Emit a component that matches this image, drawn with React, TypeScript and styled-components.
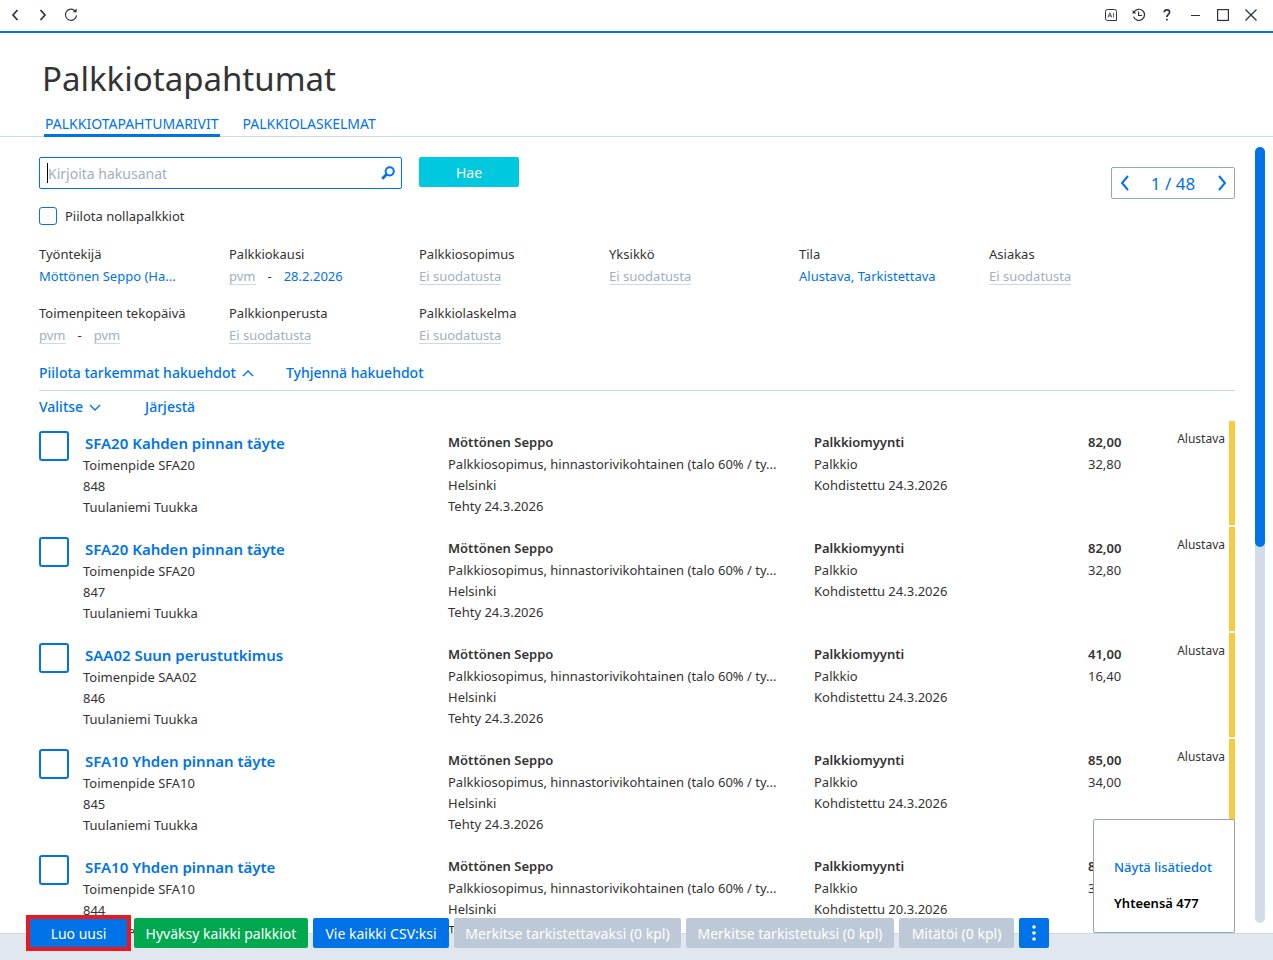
import React from "react";
import styled, { createGlobalStyle, css } from "styled-components";

const blue = "#0073e8";
const ink = "#333333";
const line = "#ccd8e4";
const muted = "#a0b0c0";

const GlobalStyle = createGlobalStyle`
  * { box-sizing: border-box; }
  body {
    margin: 0;
    background: #ffffff;
    color: ${ink};
    font-family: "Noto Sans", "Open Sans", sans-serif;
    font-size: 13px;
  }
  button, input { font-family: inherit; }
  button { cursor: pointer; }
  h1, h2, p, ul { margin: 0; padding: 0; }
`;

const Shell = styled.div`
  display: flex;
  flex-direction: column;
  height: 100vh;
  overflow: hidden;
`;

const TitleBar = styled.div`
  display: flex;
  justify-content: space-between;
  flex: none;
  height: 33px;
  padding: 0 8px 0 1px;
  border-bottom: 2px solid ${blue};
`;

const IconGroup = styled.div`
  display: flex;
`;

const WindowButton = styled.button`
  display: grid;
  place-items: center;
  width: 28px;
  height: 30px;
  padding: 0;
  border: 0;
  background: none;
  color: #2b3440;
`;

const Header = styled.header`
  flex: none;
  padding: 22px 44px 0;
  border-bottom: 1px solid ${line};
`;

const Title = styled.h1`
  height: 48px;
  margin-left: -2px;
  font-size: 33px;
  font-weight: 400;
  line-height: 48px;
`;

const Tabs = styled.nav`
  display: flex;
  gap: 22px;
  height: 34px;
  margin-bottom: -1px;
  padding-top: 10px;
`;

const Tab = styled.a<{ $active?: boolean }>`
  height: 24px;
  padding: 0 1px;
  border-bottom: 3px solid ${(p) => (p.$active ? blue : "transparent")};
  color: ${blue};
  font-size: 14px;
  line-height: 21px;
  text-decoration: none;
`;

const Main = styled.main`
  position: relative;
  display: flex;
  flex: 1;
  min-height: 0;
  padding: 0 8px 0 39px;
`;

const Content = styled.div`
  flex: 1;
  min-width: 0;
  padding-top: 20px;
  overflow: hidden;
`;

const ScrollTrack = styled.div`
  flex: none;
  width: 10px;
  margin: 10px 0 10px 20px;
  border-radius: 5px;
  background: #d2dce6;
`;

const ScrollThumb = styled.div`
  height: 400px;
  border-radius: 5px;
  background: ${blue};
`;

const SearchArea = styled.div`
  display: flex;
  align-items: flex-start;
  justify-content: space-between;
`;

const SearchRow = styled.form`
  display: flex;
  align-items: flex-start;
  gap: 17px;
`;

const SearchBox = styled.div`
  display: flex;
  align-items: center;
  width: 363px;
  height: 32px;
  padding: 0 6px 0 7px;
  border: 1px solid ${blue};
  border-radius: 2px;
`;

const Caret = styled.span`
  width: 1px;
  height: 20px;
  background: #000000;
`;

const SearchInput = styled.input`
  flex: 1;
  min-width: 0;
  padding: 0;
  border: 0;
  outline: 0;
  background: none;
  font-size: 14px;
  &::placeholder { color: ${muted}; opacity: 1; }
`;

const SearchButton = styled.button`
  width: 100px;
  height: 30px;
  border: 0;
  border-radius: 2px;
  background: #00c8de;
  color: #ffffff;
  font-size: 14px;
`;

const Pager = styled.div`
  display: flex;
  align-items: center;
  justify-content: space-between;
  width: 124px;
  height: 32px;
  margin-top: 10px;
  border: 1px solid #93a7b9;
  border-radius: 2px;
  color: ${blue};
  font-size: 17px;
`;

const PagerButton = styled.button`
  display: grid;
  place-items: center;
  width: 25px;
  height: 30px;
  padding: 0;
  border: 0;
  background: none;
  color: ${blue};
`;

const Check = styled.input<{ $size: number }>`
  appearance: none;
  flex: none;
  width: ${(p) => p.$size}px;
  height: ${(p) => p.$size}px;
  margin: 0;
  border: ${(p) => (p.$size > 20 ? 2 : 1)}px solid ${blue};
  border-radius: 3px;
  background: #ffffff;
`;

const CheckLabel = styled.label`
  display: flex;
  align-items: center;
  gap: 8px;
  height: 18px;
  margin-top: 18px;
`;

const Filters = styled.div`
  display: grid;
  grid-template-columns: repeat(6, 190fr) 56fr;
  row-gap: 15px;
  margin-top: 18px;
`;

const Filter = styled.div<{ $newRow?: boolean }>`
  ${(p) => p.$newRow && css`grid-column-start: 1;`}
  line-height: 22px;
  white-space: nowrap;
`;

const FilterValues = styled.div`
  display: flex;
  align-items: center;
  gap: 12px;
  height: 22px;
`;

const FilterLink = styled.a<{ $empty: boolean }>`
  border-bottom: 1px solid ${(p) => (p.$empty ? line : "transparent")};
  color: ${(p) => (p.$empty ? muted : blue)};
  line-height: 16px;
  text-decoration: none;
`;

const LinkRow = styled.div<{ $ruled?: boolean }>`
  display: flex;
  gap: ${(p) => (p.$ruled ? 32 : 44)}px;
  margin-top: ${(p) => (p.$ruled ? 16 : 5)}px;
  padding-bottom: ${(p) => (p.$ruled ? 6 : 3)}px;
  border-bottom: ${(p) => (p.$ruled ? `1px solid ${line}` : "0")};
`;

const TextButton = styled.button`
  display: flex;
  align-items: center;
  gap: 6px;
  height: 22px;
  padding: 0;
  border: 0;
  background: none;
  color: ${blue};
  font-size: 14px;
  font-weight: 500;
  line-height: 22px;
`;

const Rows = styled.ul`
  list-style: none;
`;

const Row = styled.li`
  display: grid;
  grid-template-columns: 44px 365fr 366fr 274fr 60fr 77fr 10px;
  height: 104px;
  margin-bottom: 2px;
  line-height: 21px;
  white-space: nowrap;
`;

const CheckCell = styled.div`
  padding-top: 10px;
`;

const Cell = styled.div`
  min-width: 0;
  padding-top: 10px;
`;

const RowTitle = styled.a`
  display: block;
  padding-left: 2px;
  color: ${blue};
  font-size: 15px;
  font-weight: 600;
  line-height: 24px;
  text-decoration: none;
`;

const Strong = styled.p`
  font-weight: 600;
  line-height: 23px;
`;

const Status = styled.p`
  padding-top: 7px;
  font-size: 12px;
  text-align: right;
`;

const StatusBar = styled.div`
  width: 6px;
  margin-left: 4px;
  background: #fbc940;
`;

const Summary = styled.aside`
  position: absolute;
  right: 38px;
  bottom: 0;
  display: flex;
  flex-direction: column;
  align-items: flex-start;
  gap: 14px;
  width: 142px;
  height: 114px;
  padding: 36px 0 0 20px;
  border: 1px solid #93a7b9;
  border-radius: 2px;
  background: #ffffff;
`;

const SummaryLink = styled.a`
  color: ${blue};
  font-weight: 500;
  line-height: 22px;
  text-decoration: none;
`;

const SummaryTotal = styled.p`
  color: #000000;
  font-weight: 600;
  line-height: 22px;
`;

const Footer = styled.footer`
  position: relative;
  flex: none;
  height: 27px;
  border-top: 1px solid ${line};
  background: #e1e7ee;
`;

const Toolbar = styled.div`
  position: absolute;
  left: 26px;
  bottom: 10px;
  display: flex;
  align-items: center;
  gap: 5px;
  height: 34px;
`;

const ActionButton = styled.button<{ $width: number; $tone?: string }>`
  display: grid;
  flex: none;
  place-items: center;
  width: ${(p) => p.$width}px;
  height: 30px;
  padding: 0;
  border: 0;
  border-radius: 2px;
  background: ${(p) => p.$tone ?? blue};
  color: #ffffff;
  font-size: 14px;
  white-space: nowrap;
`;

const HighlightedButton = styled(ActionButton)`
  height: 36px;
  margin-right: -2px;
  border: 4px solid #e81a1f;
  border-radius: 0;
`;

type ChevronProps = { points: string; width: number; height: number; weight?: number };

const Chevron = ({ points, width, height, weight = 2 }: ChevronProps) => (
  <svg width={width} height={height} viewBox={`0 0 ${width} ${height}`} fill="none" stroke="currentColor" strokeWidth={weight}>
    <polyline points={points} />
  </svg>
);

const ReloadIcon = () => (
  <svg width="14" height="14" viewBox="0 0 14 14" fill="none" stroke="currentColor" strokeWidth="1.1">
    <path d="M11.2 3A5.6 5.6 0 1 0 12.6 7.4" />
    <path d="M8.6 4.2h4V.6z" fill="currentColor" stroke="none" />
  </svg>
);

const AiIcon = () => (
  <svg width="12" height="12" viewBox="0 0 12 12" fill="none" stroke="currentColor">
    <path d="M2.5.5h7a2 2 0 0 1 2 2v9h-9a2 2 0 0 1-2-2v-7a2 2 0 0 1 2-2z" />
    <path d="M3 8.4 4.9 3.8 6.8 8.4M3.6 6.9h2.6M8.6 3.8v4.6" strokeWidth=".8" />
  </svg>
);

const HistoryIcon = () => (
  <svg width="14" height="14" viewBox="0 0 14 14" fill="none" stroke="currentColor" strokeWidth="1.2">
    <path d="M2 4.2A5.6 5.6 0 1 1 1.6 8.6" />
    <path d="M6.6 3.4v4.1h3.6" />
    <path d="M.6 2v3.6h3.8z" fill="currentColor" stroke="none" />
  </svg>
);

const HelpIcon = () => (
  <svg width="8" height="12" viewBox="0 0 8 12" fill="none" stroke="currentColor" strokeWidth="1.7">
    <path d="M1.2 3.2C1.3 1.6 2.5.9 3.9.9 5.4.9 6.6 1.7 6.6 3.2 6.6 5.2 3.9 5.4 3.9 7.9" />
    <path d="M3.9 9.7v1.8" />
  </svg>
);

const MinimizeIcon = () => (
  <svg width="9" height="13" viewBox="0 0 9 13" stroke="currentColor">
    <path d="M0 6.5h9" />
  </svg>
);

const MaximizeIcon = () => (
  <svg width="12" height="12" viewBox="0 0 12 12" fill="none" stroke="currentColor" strokeWidth="1.2">
    <rect x=".6" y=".6" width="10.8" height="10.8" />
  </svg>
);

const CloseIcon = () => (
  <svg width="12" height="12" viewBox="0 0 12 12" stroke="currentColor" strokeWidth="1.3">
    <path d="M.5.5l11 11M11.5.5l-11 11" />
  </svg>
);

const SearchIcon = () => (
  <svg width="14" height="14" viewBox="0 0 14 14" fill="none" stroke={blue}>
    <circle cx="8.7" cy="5.3" r="4.1" strokeWidth="2" />
    <path d="M5.7 8.2 1.2 12.7" strokeWidth="2.8" />
  </svg>
);

const DotsIcon = () => (
  <svg width="4" height="16" viewBox="0 0 4 16" fill="#ffffff">
    <circle cx="2" cy="2" r="1.8" />
    <circle cx="2" cy="8" r="1.8" />
    <circle cx="2" cy="14" r="1.8" />
  </svg>
);

type FilterData = { label: string; from?: string; to?: string; newRow?: boolean };

const filters: FilterData[] = [
  { label: "Työntekijä", from: "Möttönen Seppo (Ha..." },
  { label: "Palkkiokausi", from: "pvm", to: "28.2.2026" },
  { label: "Palkkiosopimus" },
  { label: "Yksikkö" },
  { label: "Tila", from: "Alustava, Tarkistettava" },
  { label: "Asiakas" },
  { label: "Toimenpiteen tekopäivä", from: "pvm", to: "pvm", newRow: true },
  { label: "Palkkionperusta" },
  { label: "Palkkiolaskelma" },
];

const rows = [
  { code: "SFA20", name: "Kahden pinnan täyte", id: "848", price: "82,00", fee: "32,80", date: "24.3.2026" },
  { code: "SFA20", name: "Kahden pinnan täyte", id: "847", price: "82,00", fee: "32,80", date: "24.3.2026" },
  { code: "SAA02", name: "Suun perustutkimus", id: "846", price: "41,00", fee: "16,40", date: "24.3.2026" },
  { code: "SFA10", name: "Yhden pinnan täyte", id: "845", price: "85,00", fee: "34,00", date: "24.3.2026" },
  { code: "SFA10", name: "Yhden pinnan täyte", id: "844", price: "85,00", fee: "34,00", date: "20.3.2026" },
];

const isUnset = (value: string) => value === "pvm" || value === "Ei suodatusta";

const FilterValue = ({ value }: { value: string }) => (
  <FilterLink href="#" $empty={isUnset(value)}>{value}</FilterLink>
);

const disabledTone = "#bec9d7";

export default function App() {
  return (
    <Shell>
      <GlobalStyle />
      <TitleBar>
        <IconGroup>
          <WindowButton aria-label="Takaisin"><Chevron points="6.5,1 2,6 6.5,11" width={8} height={12} weight={1.7} /></WindowButton>
          <WindowButton aria-label="Eteenpäin"><Chevron points="1.5,1 6,6 1.5,11" width={8} height={12} weight={1.7} /></WindowButton>
          <WindowButton aria-label="Päivitä"><ReloadIcon /></WindowButton>
        </IconGroup>
        <IconGroup>
          <WindowButton aria-label="Tekoäly"><AiIcon /></WindowButton>
          <WindowButton aria-label="Historia"><HistoryIcon /></WindowButton>
          <WindowButton aria-label="Ohje"><HelpIcon /></WindowButton>
          <WindowButton aria-label="Pienennä"><MinimizeIcon /></WindowButton>
          <WindowButton aria-label="Suurenna"><MaximizeIcon /></WindowButton>
          <WindowButton aria-label="Sulje"><CloseIcon /></WindowButton>
        </IconGroup>
      </TitleBar>

      <Header>
        <Title>Palkkiotapahtumat</Title>
        <Tabs>
          <Tab href="#" $active>PALKKIOTAPAHTUMARIVIT</Tab>
          <Tab href="#">PALKKIOLASKELMAT</Tab>
        </Tabs>
      </Header>

      <Main>
        <Content>
          <SearchArea>
            <div>
              <SearchRow onSubmit={(e) => e.preventDefault()}>
                <SearchBox>
                  <Caret />
                  <SearchInput aria-label="Hakusanat" placeholder="Kirjoita hakusanat" />
                  <SearchIcon />
                </SearchBox>
                <SearchButton type="submit">Hae</SearchButton>
              </SearchRow>
              <CheckLabel>
                <Check type="checkbox" $size={18} />
                Piilota nollapalkkiot
              </CheckLabel>
            </div>
            <Pager>
              <PagerButton aria-label="Edellinen sivu"><Chevron points="8,1 2,8 8,15" width={10} height={16} /></PagerButton>
              <span>1 / 48</span>
              <PagerButton aria-label="Seuraava sivu"><Chevron points="2,1 8,8 2,15" width={10} height={16} /></PagerButton>
            </Pager>
          </SearchArea>

          <Filters>
            {filters.map(({ label, from = "Ei suodatusta", to, newRow }) => (
              <Filter key={label} $newRow={newRow}>
                {label}
                <FilterValues>
                  <FilterValue value={from} />
                  {to && <span>-</span>}
                  {to && <FilterValue value={to} />}
                </FilterValues>
              </Filter>
            ))}
          </Filters>

          <LinkRow $ruled>
            <TextButton>
              Piilota tarkemmat hakuehdot
              <Chevron points="1,7 6,2 11,7" width={12} height={9} weight={1.4} />
            </TextButton>
            <TextButton>Tyhjennä hakuehdot</TextButton>
          </LinkRow>
          <LinkRow>
            <TextButton>
              Valitse
              <Chevron points="1,2 6,7 11,2" width={12} height={9} weight={1.4} />
            </TextButton>
            <TextButton>Järjestä</TextButton>
          </LinkRow>

          <Rows>
            {rows.map((row) => (
              <Row key={row.id}>
                <CheckCell>
                  <Check type="checkbox" $size={30} aria-label={`Valitse ${row.id}`} />
                </CheckCell>
                <Cell>
                  <RowTitle href="#">{row.code} {row.name}</RowTitle>
                  <p>Toimenpide {row.code}</p>
                  <p>{row.id}</p>
                  <p>Tuulaniemi Tuukka</p>
                </Cell>
                <Cell>
                  <Strong>Möttönen Seppo</Strong>
                  <p>Palkkiosopimus, hinnastorivikohtainen (talo 60% / ty...</p>
                  <p>Helsinki</p>
                  <p>Tehty 24.3.2026</p>
                </Cell>
                <Cell>
                  <Strong>Palkkiomyynti</Strong>
                  <p>Palkkio</p>
                  <p>Kohdistettu {row.date}</p>
                </Cell>
                <Cell>
                  <Strong>{row.price}</Strong>
                  <p>{row.fee}</p>
                </Cell>
                <Status>Alustava</Status>
                <StatusBar />
              </Row>
            ))}
          </Rows>
        </Content>
        <ScrollTrack><ScrollThumb /></ScrollTrack>
        <Summary>
          <SummaryLink href="#">Näytä lisätiedot</SummaryLink>
          <SummaryTotal>Yhteensä 477</SummaryTotal>
        </Summary>
      </Main>

      <Footer>
        <Toolbar>
          <HighlightedButton $width={105}>Luo uusi</HighlightedButton>
          <ActionButton $width={174} $tone="#00a94f">Hyväksy kaikki palkkiot</ActionButton>
          <ActionButton $width={136}>Vie kaikki CSV:ksi</ActionButton>
          <ActionButton $width={227} $tone={disabledTone}>Merkitse tarkistettavaksi (0 kpl)</ActionButton>
          <ActionButton $width={208} $tone={disabledTone}>Merkitse tarkistetuksi (0 kpl)</ActionButton>
          <ActionButton $width={115} $tone={disabledTone}>Mitätöi (0 kpl)</ActionButton>
          <ActionButton $width={30} aria-label="Lisää toimintoja"><DotsIcon /></ActionButton>
        </Toolbar>
      </Footer>
    </Shell>
  );
}
